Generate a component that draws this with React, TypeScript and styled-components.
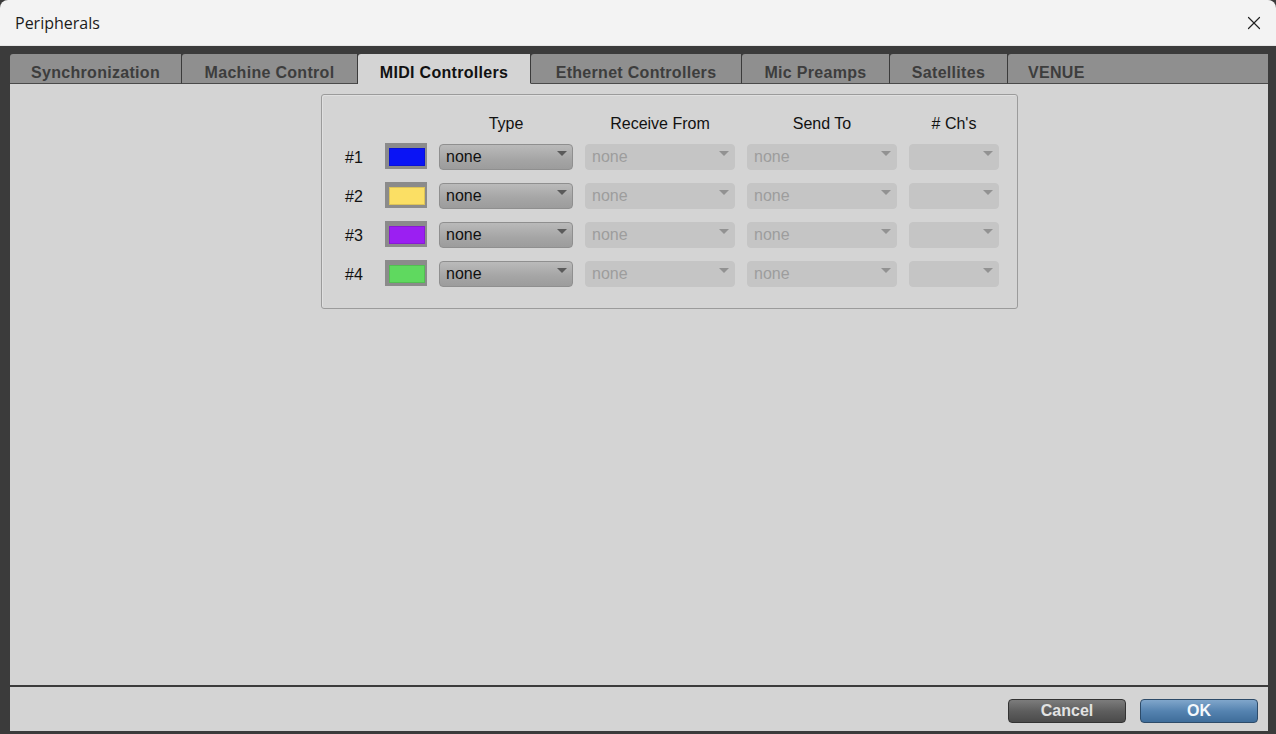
import React from 'react';
import styled, { createGlobalStyle } from 'styled-components';
import { X } from 'lucide-react';

const GlobalStyle = createGlobalStyle`
  html, body {
    margin: 0;
    padding: 0;
    background: #3b3b3b;
  }
  * { box-sizing: border-box; }
`;

const Window = styled.div`
  width: 1276px;
  height: 734px;
  display: flex;
  flex-direction: column;
  background: #3b3b3b;
  font-family: "Liberation Sans", Arial, sans-serif;
`;

const TitleBar = styled.div`
  height: 46px;
  flex: none;
  display: flex;
  align-items: center;
  justify-content: space-between;
  padding: 0 10px 0 15px;
  background: #f3f3f3;
  border-radius: 8px 8px 0 0;
  border-bottom: 1px solid #e6e6e6;
  font-family: "Open Sans", "Noto Sans", sans-serif;
  font-size: 16px;
  color: #1b1b1b;
`;

const CloseButton = styled.div`
  width: 24px;
  height: 24px;
  display: flex;
  align-items: center;
  justify-content: center;
  color: #222;
`;

const Frame = styled.div`
  flex: 1;
  display: flex;
  flex-direction: column;
  padding: 8px 8px 3px 10px;
  min-height: 0;
`;

const TabStrip = styled.div`
  display: flex;
  height: 30px;
  flex: none;
`;

const Tab = styled.div<{ $active?: boolean; $width?: number; $left?: boolean }>`
  ${(p) => (p.$width ? `width: ${p.$width}px; flex: none;` : 'flex: 1;')}
  display: flex;
  align-items: center;
  justify-content: ${(p) => (p.$left ? 'flex-start' : 'center')};
  padding: ${(p) => (p.$left ? '8px 0 0 20px' : '8px 0 0 0')};
  background: ${(p) => (p.$active ? '#d4d4d4' : '#8f8f8f')};
  border-right: 1px solid #3b3b3b;
  border-bottom: 1px solid ${(p) => (p.$active ? '#d4d4d4' : '#4a4a4a')};
  border-radius: 3px 0 0 0;
  font-size: 16px;
  font-weight: bold;
  letter-spacing: 0.3px;
  color: ${(p) => (p.$active ? '#111' : '#3d3d3d')};
  white-space: nowrap;
  &:last-child {
    border-right: none;
  }
`;

const Content = styled.div`
  flex: 1;
  background: #d4d4d4;
  padding: 10px 0 0 311px;
`;

const Panel = styled.div`
  width: 697px;
  height: 215px;
  border: 1px solid #9b9b9b;
  border-radius: 3px;
  box-shadow: inset 1px 1px 0 #e0e0e0;
  padding: 17px 0 0 23px;
  display: grid;
  grid-template-columns: 28px 42px 134px 150px 150px 90px;
  grid-template-rows: 19px repeat(4, 26px);
  column-gap: 12px;
  row-gap: 13px;
  align-content: start;
`;

const Header = styled.div`
  font-size: 16px;
  color: #111;
  text-align: center;
  line-height: 19px;
  padding-top: 2px;
`;

const RowLabel = styled.div`
  font-size: 16px;
  color: #111;
  display: flex;
  align-items: center;
  padding-top: 2px;
`;

const Swatch = styled.div<{ $color: string }>`
  width: 42px;
  height: 26px;
  margin-top: -1px;
  background: #8b8b8b;
  padding: 5px 4px;
  &::before {
    content: '';
    display: block;
    width: 100%;
    height: 100%;
    background: ${(p) => p.$color};
    border: 1px solid rgba(0, 0, 0, 0.12);
  }
`;

const Select = styled.div<{ $disabled?: boolean }>`
  position: relative;
  height: 26px;
  border-radius: 4px;
  display: flex;
  align-items: center;
  padding: 0 0 0 6px;
  font-size: 16px;
  color: ${(p) => (p.$disabled ? '#9d9d9d' : '#111')};
  background: ${(p) =>
    p.$disabled ? '#c5c5c5' : 'linear-gradient(#bababa, #a5a5a5 60%, #9c9c9c)'};
  border: 1px solid ${(p) => (p.$disabled ? '#c5c5c5' : '#8f8f8f')};
  &::after {
    content: '';
    position: absolute;
    right: 5px;
    top: 6px;
    border-left: 5px solid transparent;
    border-right: 5px solid transparent;
    border-top: 5px solid ${(p) => (p.$disabled ? '#929292' : '#5a5a5a')};
  }
`;

const Separator = styled.div`
  height: 2px;
  flex: none;
  background: #3b3b3b;
`;

const Footer = styled.div`
  height: 44px;
  flex: none;
  background: #d4d4d4;
  display: flex;
  justify-content: flex-end;
  align-items: flex-start;
  gap: 14px;
  padding: 12px 10px 0 0;
`;

const Button = styled.div<{ $primary?: boolean }>`
  width: 118px;
  height: 24px;
  border-radius: 4px;
  display: flex;
  align-items: center;
  justify-content: center;
  font-size: 16px;
  font-weight: bold;
  color: ${(p) => (p.$primary ? '#f4f8fc' : '#e2e2e2')};
  background: ${(p) =>
    p.$primary
      ? 'linear-gradient(#80a6cb, #5583b0 50%, #3f6d9a)'
      : 'linear-gradient(#7c7c7c, #5e5e5e 50%, #4b4b4b)'};
  border: 1px solid ${(p) => (p.$primary ? '#2d4b69' : '#333')};
`;

const tabs = [
  { label: 'Synchronization', width: 172 },
  { label: 'Machine Control', width: 176 },
  { label: 'MIDI Controllers', width: 173, active: true },
  { label: 'Ethernet Controllers', width: 211 },
  { label: 'Mic Preamps', width: 148 },
  { label: 'Satellites', width: 118 },
  { label: 'VENUE' },
];

const controllers = [
  { id: '#1', color: '#0a14f5' },
  { id: '#2', color: '#fbdf64' },
  { id: '#3', color: '#9b1ff2' },
  { id: '#4', color: '#5fd95f' },
];

const App: React.FC = () => {
  return (
    <>
      <GlobalStyle />
      <Window>
        <TitleBar>
          <span>Peripherals</span>
          <CloseButton>
            <X size={22} strokeWidth={1.3} />
          </CloseButton>
        </TitleBar>
        <Frame>
          <TabStrip>
            {tabs.map((t) => (
              <Tab key={t.label} $active={t.active} $width={t.width} $left={!t.width}>
                {t.label}
              </Tab>
            ))}
          </TabStrip>
          <Content>
            <Panel>
              <div />
              <div />
              <Header>Type</Header>
              <Header>Receive From</Header>
              <Header>Send To</Header>
              <Header># Ch's</Header>
              {controllers.map((c) => (
                <React.Fragment key={c.id}>
                  <RowLabel>{c.id}</RowLabel>
                  <Swatch $color={c.color} />
                  <Select>none</Select>
                  <Select $disabled>none</Select>
                  <Select $disabled>none</Select>
                  <Select $disabled />
                </React.Fragment>
              ))}
            </Panel>
          </Content>
          <Separator />
          <Footer>
            <Button>Cancel</Button>
            <Button $primary>OK</Button>
          </Footer>
        </Frame>
      </Window>
    </>
  );
};

export default App;
